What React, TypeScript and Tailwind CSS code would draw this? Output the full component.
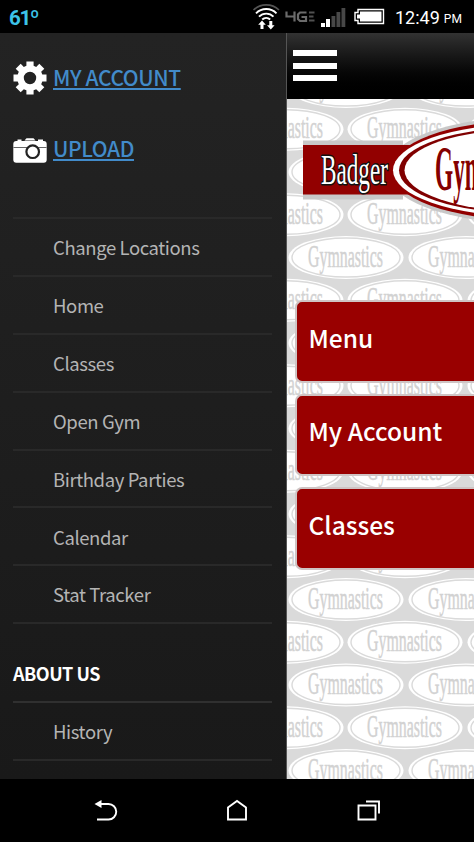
const menuItems = ['Change Locations', 'Home', 'Classes', 'Open Gym', 'Birthday Parties', 'Calendar', 'Stat Tracker'];
const tiles = ['Menu', 'My Account', 'Classes'];

// Centres of the ovals in the page wallpaper, relative to the page's own corner
const ovalRows = Array.from({ length: 17 }, (_, row) => ({
  cy: -12.5 + row * 42.75,
  columns: row % 2 === 0 ? [59, 179] : [-1, 118, 238]
}));

const GearIcon = () => (
  <svg className="h-[34px] w-[34px]" viewBox="0 0 34 34" fill="#fff">
    <path
      fillRule="evenodd"
      d="M13.4 .5h7.2v4.3l2.6 1.1 3.1-3.1 5 5-3.1 3 1.1 2.7h4.2v7h-4.2l-1.1 2.7 3.1 3.1-5 5-3.1-3.1-2.6 1.1v4.2h-7.2v-4.2l-2.6-1.1-3.1 3.1-5-5 3.1-3.1-1.1-2.7H.5v-7h4.2l1.1-2.7-3.1-3 5-5 3.1 3.1 2.6-1.1zM17 10.8a6.2 6.2 0 1 0 0 12.4a6.2 6.2 0 0 0 0-12.4z"
    />
  </svg>
);

const CameraIcon = () => (
  <svg className="mt-[2px] h-[26px] w-[34px]" viewBox="0 0 34 26">
    <path d="M4.500 3.300h4M25 3.300h5" stroke="#fff" strokeWidth="1.600" />
    <path d="M11.500 3.500l2-2.300h7l2 2.300z" fill="#fff" />
    <rect x=".3" y="4" width="33.400" height="21.700" rx="3" fill="#fff" />
    <path d="M.5 10.500h33" stroke="#222" strokeWidth=".7" />
    <circle cx="19.700" cy="14.700" r="6.300" fill="#fff" stroke="#222" strokeWidth="2.200" />
  </svg>
);

const StatusBar = () => (
  <div className="flex h-[33px] shrink-0 items-center bg-black font-['Roboto',sans-serif]">
    <span className="ml-[9px] mt-[3px] w-[240px] text-[20.500px] font-bold tracking-[-1.300px] text-[#3cc3e8]">61º</span>
    <svg className="h-[33px] w-[136px]" viewBox="249 0 136 33" fill="none">
      <path d="M253.500 10a18.500 18.500 0 0 1 25.500 0" stroke="#555" strokeWidth="1.700" />
      <path
        d="M256 13.300a14.500 14.500 0 0 1 20.500 0M259 16.700a10 10 0 0 1 14.500 0M262.200 19.500a6 6 0 0 1 8 0"
        stroke="#fff"
        strokeWidth="1.900"
      />
      <path d="M262 20.500l3.800 4.200h-2.300v4.300h-3v-4.300h-2.300zM270.800 29.500l-3.800-4.200h2.300V21h3v4.300h2.300z" fill="#fff" />
      <path d="M286.500 11.500v5h9M294.500 11.500v10M306.500 12.500h-6.500l-2 2v4.500l2 2h6v-4h-4.500" stroke="#6b6b6b" strokeWidth="2.200" />
      <path d="M309 12.500h5.500M309 16.500h4.500M309 20.500h5.500" stroke="#505050" strokeWidth="2" />
      <path d="M321 23h4v4h-4zM326 19h4v8h-4z" fill="#fff" />
      <path d="M331.500 16h3.800v11h-3.800zM336.500 12h3.800v15h-3.800zM341.500 8h3.800v19h-3.800z" fill="#484848" />
      <path d="M358 9.500h25.500v14H358v-3h-3v-8h3z" stroke="#fff" strokeWidth="1.400" />
      <path d="M360 11.500h21.500v10H360v-3h-3v-4h3z" fill="#fff" />
    </svg>
    <span className="ml-[10px] mt-[1px] text-[18px] text-white">12:49</span>
    <span className="ml-[4px] mt-[5px] text-[12px] text-white">PM</span>
  </div>
);

const Sidebar = () => (
  <nav className="h-full w-[286px] shrink-0 overflow-hidden bg-linear-to-b from-[#232323] to-[#191919] pl-[13px] pr-[14px]">
    <div className="flex h-[90px] items-center gap-[6px]">
      <GearIcon />
      <a className="pb-px text-[21px] font-medium tracking-[-0.4px] text-[#428bca] underline">MY ACCOUNT</a>
    </div>
    <div className="flex h-[52px] items-center gap-[6px]">
      <CameraIcon />
      <a className="pb-px text-[21px] font-medium tracking-[-0.4px] text-[#428bca] underline">UPLOAD</a>
    </div>
    <ul className="mt-[42px] border-t-2 border-[#292929]">
      {menuItems.map((item) => (
        <li
          key={item}
          className="flex h-[57.900px] items-center border-b-2 border-[#292929] pl-10 pt-[2px] text-[18.500px] tracking-[-0.4px] text-[#b4b4b4]"
        >
          {item}
        </li>
      ))}
    </ul>
    <h2 className="flex h-[77px] items-center pt-[22px] text-[18px] font-bold tracking-[-0.5px] text-white">ABOUT US</h2>
    <ul className="border-t-2 border-[#303030]">
      <li className="flex h-[58px] items-center border-b-2 border-[#292929] pl-10 pt-[2px] text-[18.500px] tracking-[-0.4px] text-[#b4b4b4]">
        History
      </li>
    </ul>
  </nav>
);

const Wallpaper = () => (
  <svg className="absolute inset-0 h-full w-full" viewBox="0 0 187 680">
    <rect width="187" height="680" fill="#dadada" />
    {ovalRows.map(({ cy, columns }) =>
      columns.map((cx) => (
        <g key={`${cy}-${cx}`}>
          <ellipse cx={cx} cy={cy} rx="57.500" ry="21.500" fill="#fff" />
          <ellipse cx={cx} cy={cy} rx="54" ry="19.500" fill="none" stroke="#dadada" strokeWidth="1.400" />
          {cx < 220 && (
            <text
              x={cx - 38}
              y={cy + 9}
              textLength="75"
              lengthAdjust="spacingAndGlyphs"
              strokeWidth=".5"
              className="fill-[#d2d2d2] stroke-[#d2d2d2] font-['Liberation_Serif',serif] text-[32px]"
            >
              Gymnastics
            </text>
          )}
        </g>
      ))
    )}
  </svg>
);

const Logo = () => (
  <svg className="relative block h-[106px] w-[171px]" viewBox="303 118 171 106">
    <ellipse cx="525" cy="170.300" rx="139" ry="53" fill="#c8c8c8" />
    <rect x="303" y="140.500" width="100" height="59" fill="#c8c8c8" />
    <rect x="303" y="145" width="110" height="49.500" fill="#920000" />
    <ellipse cx="525" cy="170.300" rx="134" ry="49.700" fill="#920000" />
    <ellipse cx="525" cy="170.300" rx="132" ry="46" fill="#fff" />
    <ellipse cx="525" cy="170.300" rx="126" ry="43" fill="#800000" />
    <ellipse cx="525" cy="170.300" rx="120.500" ry="41" fill="#fff" />
    {/* dark outline sits under the white lettering */}
    <g className="font-['Liberation_Serif',serif] text-[43px]">
      <text
        x="321"
        y="183.500"
        textLength="67"
        lengthAdjust="spacingAndGlyphs"
        stroke="#111"
        strokeWidth="3.200"
        strokeLinejoin="round"
        paintOrder="stroke"
        className="fill-white"
      >
        Badger
      </text>
    </g>
    <text
      transform="translate(435 190) scale(.37 1)"
      className="fill-[#850000] font-['Liberation_Serif',serif] text-[63px] font-bold"
    >
      Gymnastics
    </text>
  </svg>
);

const Page = () => (
  <main className="flex h-full w-[188px] shrink-0 flex-col border-l border-[#555] bg-white">
    <header className="flex h-[66px] shrink-0 flex-col gap-[6.500px] bg-linear-to-b from-[#323232] to-black pl-[6px] pt-[17px]">
      <span className="h-[6px] w-[44px] bg-white" />
      <span className="h-[6px] w-[44px] bg-white" />
      <span className="h-[6px] w-[44px] bg-white" />
    </header>
    <div className="relative flex-1 overflow-hidden">
      <Wallpaper />
      <div className="relative flex h-full flex-col pt-[19px]">
        <div className="pl-4">
          <Logo />
        </div>
        <div className="mt-[76px] flex flex-col gap-[11px] pl-2">
          {tiles.map((tile) => (
            <div
              key={tile}
              className="flex h-[82.500px] items-center rounded-l-[7px] border-2 border-r-0 border-[#cfc4c4] bg-[#990000] pb-[6px] pl-[11.500px] text-[24.500px] font-medium text-white"
            >
              {tile}
            </div>
          ))}
        </div>
      </div>
    </div>
  </main>
);

const NavigationBar = () => (
  <footer className="flex h-[63px] shrink-0 items-center bg-black">
    <svg className="h-[63px] w-[474px]" viewBox="0 779 474 63" fill="none" stroke="#fff" strokeWidth="1.900">
      <path d="M100 804h8.500a7.700 7.700 0 0 1 0 15.500H97" />
      <path d="M94.500 804l7-4v8z" fill="#fff" stroke="none" />
      <path d="M228 819.500v-12l9-6.500 9 6.500v12z" />
      <path d="M358.500 805.500h17v14h-17zM366 801.500h13v12" />
    </svg>
  </footer>
);

export default function App() {
  return (
    <div className="flex h-[842px] w-[474px] flex-col overflow-hidden bg-black font-['Noto_Sans_CJK_SC',sans-serif]">
      <StatusBar />
      <div className="flex h-[746px] shrink-0">
        <Sidebar />
        <Page />
      </div>
      <NavigationBar />
    </div>
  );
}
